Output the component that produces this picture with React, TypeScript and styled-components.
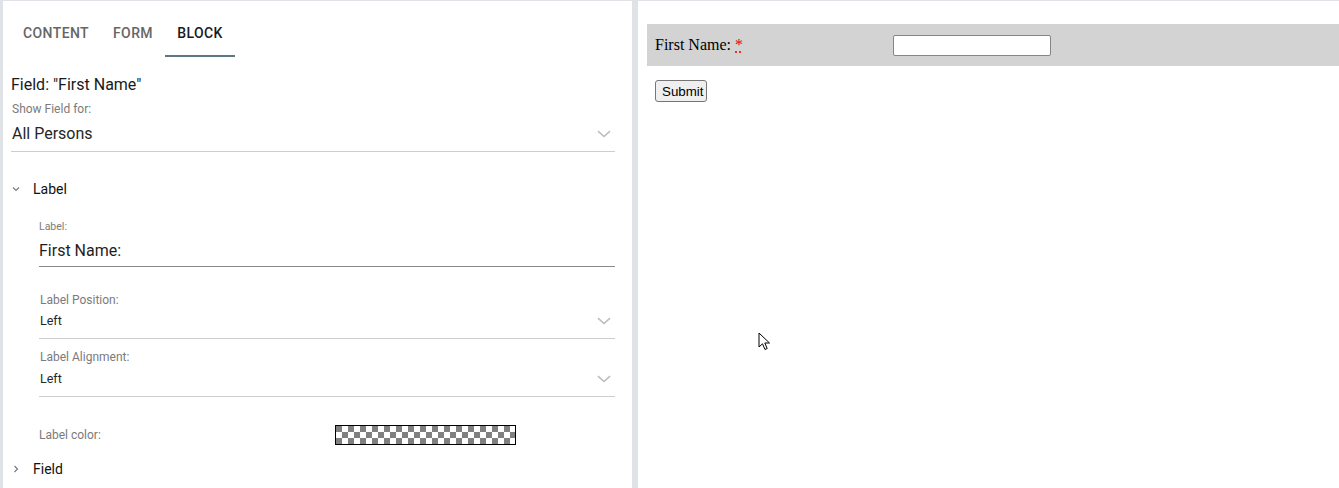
import React from "react";
import styled, { createGlobalStyle } from "styled-components";

const Global = createGlobalStyle`
  html, body { margin: 0; padding: 0; }
  body {
    background: #dfe3e8;
    font-family: Roboto, "Noto Sans", Arial, sans-serif;
    overflow: hidden;
  }
`;

const Page = styled.div`
  display: flex;
  height: 488px;
  padding: 1px 0 0 3px;
  box-sizing: border-box;
  gap: 6px;
`;

const LeftPanel = styled.div`
  width: 629px;
  flex: none;
  background: #fff;
  padding: 7px 17px 0 8px;
  box-sizing: border-box;
  display: flex;
  flex-direction: column;
`;

const Tabs = styled.div`
  display: flex;
  height: 49px;
`;

const Tab = styled.div<{ $active?: boolean; $w: number }>`
  width: ${(p) => p.$w}px;
  box-sizing: border-box;
  display: flex;
  align-items: center;
  justify-content: center;
  font-size: 14px;
  font-weight: 500;
  letter-spacing: 0.4px;
  text-transform: uppercase;
  color: ${(p) => (p.$active ? "#1a1a1a" : "#666")};
  border-bottom: 2px solid ${(p) => (p.$active ? "#5e7785" : "transparent")};
  padding-top: 3px;
`;

const Title = styled.div`
  margin-top: 16px;
  font-size: 16px;
  line-height: 24px;
  color: #1a1a1a;
`;

const SmallLabel = styled.div<{ $mt: number; $size?: number; $indent?: number }>`
  margin-top: ${(p) => p.$mt}px;
  margin-left: ${(p) => p.$indent ?? 0}px;
  font-size: ${(p) => p.$size ?? 12}px;
  line-height: 16px;
  color: #7b7b7b;
`;

const Select = styled.div<{ $size: number; $lh: number; $mt: number; $pb: number; $indent?: number }>`
  margin-top: ${(p) => p.$mt}px;
  padding: 0 4px ${(p) => p.$pb}px ${(p) => p.$indent ?? 0}px;
  display: flex;
  align-items: center;
  justify-content: space-between;
  font-size: ${(p) => p.$size}px;
  line-height: ${(p) => p.$lh}px;
  color: #262626;
  border-bottom: 1px solid #cdcdcd;
`;

const Section = styled.div<{ $mt: number }>`
  margin-top: ${(p) => p.$mt}px;
  display: flex;
  align-items: center;
  height: 20px;
  font-size: 14px;
  color: #111;
`;

const ChevronBox = styled.span`
  width: 10px;
  margin-right: 12px;
  display: flex;
  justify-content: center;
  align-items: center;
`;

const Nested = styled.div`
  padding-left: 28px;
  display: flex;
  flex-direction: column;
`;

const TextInput = styled.div`
  margin-top: 4px;
  font-size: 16px;
  line-height: 24px;
  color: #1f1f1f;
  padding-bottom: 3px;
  border-bottom: 1px solid #8a8a8a;
`;

const ColorRow = styled.div`
  margin-top: 28px;
  height: 20px;
  display: flex;
  align-items: center;
  font-size: 12px;
  color: #7b7b7b;
`;

const ColorLabel = styled.span`
  width: 296px;
`;

const Checker = styled.div`
  width: 179px;
  height: 18px;
  border: 1px solid #000;
  background-color: #fff;
  background-image: linear-gradient(45deg, #808080 25%, transparent 25%, transparent 75%, #808080 75%),
    linear-gradient(45deg, #808080 25%, transparent 25%, transparent 75%, #808080 75%);
  background-size: 12px 12px;
  background-position: 6px 0, 0 6px;
`;

const RightPanel = styled.div`
  flex: 1;
  background: #fff;
  padding: 23px 0 0 9px;
  position: relative;
  font-family: "Liberation Serif", "Times New Roman", serif;
`;

const FormRow = styled.div`
  display: flex;
  align-items: center;
  height: 42px;
  background: #d3d3d3;
  font-size: 16px;
  color: #000;
`;

const LabelCell = styled.div`
  width: 238px;
  padding-left: 8px;
  box-sizing: border-box;
`;

const Required = styled.abbr`
  color: #e00;
  text-decoration: underline dotted;
  text-underline-offset: 2px;
  cursor: help;
`;

const Input = styled.input`
  margin-left: 8px;
  width: 158px;
  height: 21px;
  box-sizing: border-box;
  border: 1px solid #858585;
  border-radius: 2px;
  background: #fff;
  padding: 1px 2px;
`;

const SubmitBtn = styled.button`
  margin: 14px 0 0 8px;
  width: 52px;
  height: 22px;
  padding: 1px 6px;
  font-family: "Liberation Sans", Arial, sans-serif;
  font-size: 13.33px;
  color: #000;
  background: #efefef;
  border: 1px solid #767676;
  border-radius: 3px;
`;

const Cursor = styled.svg`
  position: absolute;
  left: 120px;
  top: 331px;
`;

const ChevronDown = ({ color = "#bdbdbd" }: { color?: string }) => (
  <svg width="14" height="8" viewBox="0 0 14 8">
    <path d="M1 1.2 L7 6.5 L13 1.2" fill="none" stroke={color} strokeWidth="1.6" />
  </svg>
);

const SmallChevron = ({ dir }: { dir: "down" | "right" }) => (
  <svg width="8" height="8" viewBox="0 0 8 8">
    {dir === "down" ? (
      <path d="M1 2.5 L4 5.5 L7 2.5" fill="none" stroke="#6f7f8c" strokeWidth="1.2" />
    ) : (
      <path d="M2.5 1 L5.5 4 L2.5 7" fill="none" stroke="#6f7f8c" strokeWidth="1.2" />
    )}
  </svg>
);

export default function App() {
  return (
    <>
      <Global />
      <Page>
        <LeftPanel>
          <Tabs>
            <Tab $w={90}>Content</Tab>
            <Tab $w={64}>Form</Tab>
            <Tab $w={70} $active>
              Block
            </Tab>
          </Tabs>
          <Title>Field: "First Name"</Title>
          <SmallLabel $mt={4} $indent={1}>Show Field for:</SmallLabel>
          <Select $size={16} $lh={24} $mt={5} $pb={5} $indent={1}>
            <span>All Persons</span>
            <ChevronDown />
          </Select>
          <Section $mt={27}>
            <ChevronBox>
              <SmallChevron dir="down" />
            </ChevronBox>
            Label
          </Section>
          <Nested>
            <SmallLabel $mt={20} $size={10.5}>
              Label:
            </SmallLabel>
            <TextInput>First Name:</TextInput>
            <SmallLabel $mt={25} $indent={1}>Label Position:</SmallLabel>
            <Select $size={12.5} $lh={16} $mt={5} $pb={9} $indent={1}>
              <span>Left</span>
              <ChevronDown />
            </Select>
            <SmallLabel $mt={10} $indent={1}>Label Alignment:</SmallLabel>
            <Select $size={12.5} $lh={16} $mt={6} $pb={9} $indent={1}>
              <span>Left</span>
              <ChevronDown />
            </Select>
            <ColorRow>
              <ColorLabel>Label color:</ColorLabel>
              <Checker />
            </ColorRow>
          </Nested>
          <Section $mt={14}>
            <ChevronBox>
              <SmallChevron dir="right" />
            </ChevronBox>
            Field
          </Section>
        </LeftPanel>
        <RightPanel>
          <FormRow>
            <LabelCell>
              First Name: <Required title="required">*</Required>
            </LabelCell>
            <Input type="text" />
          </FormRow>
          <SubmitBtn type="button">Submit</SubmitBtn>
          <Cursor width="13" height="20" viewBox="0 0 13 20">
            <path
              d="M1 1 L1 15 L4.5 11.8 L7 17.5 L9.2 16.5 L6.8 11 L11.5 11 Z"
              fill="#fff"
              stroke="#000"
              strokeWidth="1"
              strokeLinejoin="round"
            />
          </Cursor>
        </RightPanel>
      </Page>
    </>
  );
}
